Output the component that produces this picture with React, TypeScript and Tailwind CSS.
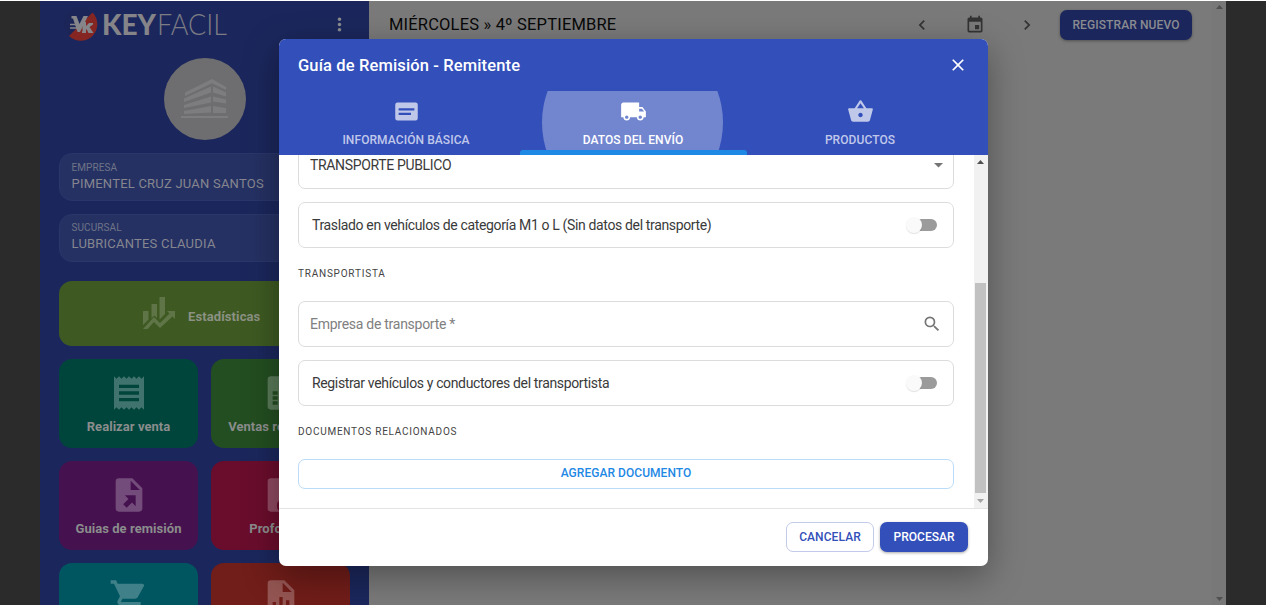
import React from "react";
import { MdChevronLeft, MdChevronRight, MdClose, MdEvent, MdLocalShipping, MdMoreVert, MdReceipt, MdSearch, MdShoppingBasket, MdShoppingCart } from "react-icons/md";

function Logo() {
  return (
    <svg width="168" height="42" viewBox="0 1 168 42" className="block">
      <circle cx="17.500" cy="24" r="16.500" fill="#1c2558" />
      <path d="M29.500 12.500 A16.500 16.500 0 0 1 6 36 Z" fill="#862622" />
      <path d="M8.500 16h5l3 8 4-8h4.500l-8 16h-2.500L10 18.500H8.500z" fill="#85858a" />
      <path d="M7 24.500h7M7 28h8" stroke="#85858a" strokeWidth="1.500" />
      <path d="M19.500 22h3.500v4l3-3h4v1.500l-3.500 2.500 4 6h-5l-2-4-.5 1v3h-4v-1.500l.5-.5z" fill="#85858a" />
      <text x="39" y="35" textLength="54" lengthAdjust="spacingAndGlyphs" fontFamily="Lato, sans-serif" fontWeight="900" fontSize="29" fill="#858589">KEY</text>
      <text x="94" y="35" textLength="70" lengthAdjust="spacingAndGlyphs" fontFamily="Lato, sans-serif" fontWeight="300" fontSize="29" fill="#7c7c84">FACIL</text>
    </svg>
  );
}

function Building() {
  return (
    <svg width="48" height="40" viewBox="0 0 48 40" fill="#7d7d80">
      <path d="M4 13.500 31 0 45 8v3L31 4.200 4 17z" />
      <path d="M3 19.500 30 7.500v6L3 23zM32 7.500 45 13.500v4L32 13.500zM3 26 30 17.500v6L3 29zM32 17.500 45 20.500v4L32 22.500zM3 32 30 27v6.500L3 35zM32 27l13 2v5H32zM0 37h47v2H0z" />
    </svg>
  );
}

function FileIcon({ kind }: { kind: "table" | "arrow" | "money" | "chart" }) {
  return (
    <svg width="40" height="40" viewBox="0 0 24 24" fill="currentColor">
      <path fillRule="evenodd" d="M6 2a2 2 0 0 0-2 2v16a2 2 0 0 0 2 2h12a2 2 0 0 0 2-2V8l-6-6zm7 1.500L18.500 9H13z" />
      {kind === "table" && <path className="text-[#234e21]" d="M7 11h3v2H7zm0 3h3v2H7zm0 3h3v2H7zm4-6h6v2h-6zm0 3h6v2h-6zm0 3h6v2h-6z" />}
      {kind === "arrow" && <path className="text-[#46114f]" d="M9.500 12.200H16v6.500l-2.200-2.200-3.200 3.200-2.100-2.100 3.200-3.200z" />}
      {kind === "money" && <circle className="text-[#6a0d2c]" cx="14" cy="18.500" r="4.500" />}
      {kind === "chart" && <path className="text-[#711d19]" d="M7 15h2v5H7zm4-3h2v8h-2zm4 2h2v6h-2z" />}
    </svg>
  );
}

function StatsIcon() {
  return (
    <svg width="34" height="34" viewBox="0 0 34 34" fill="#5f7548">
      <path d="M1 15h5.500v8.500L1 29zM9.500 8H15v14l-2.500-2.500-3 2.500zM17.500 1H23v17l-5.500 5.500zM25 15h8v8l-2.500-2.500L18 32l-6-6-6.500 7H1l11-12 6 6 9.500-9.500z" />
    </svg>
  );
}

function Account({ label, value }: { label: string; value: string }) {
  return (
    <div className="h-12 rounded-[13px] border border-[#2a366a] bg-[#253163] px-[11.500px] pt-[7.500px] text-[#85868f]">
      <div className="text-[10px] leading-[12px] tracking-[0.100px] text-[#6f7487]">{label}</div>
      <div className="mt-px text-[13px] leading-[18px] tracking-[0.220px]">{value}</div>
    </div>
  );
}

function Tile({ label, tone, children }: { label?: string; tone: string; children: React.ReactNode }) {
  return (
    <div className={"flex h-[89px] flex-col items-center rounded-[13px] pt-[14px] " + tone}>
      <div className="h-10 text-white/25">{children}</div>
      {label && <div className="mt-[5px] whitespace-nowrap text-[13px] font-bold leading-[18px] tracking-[0.050px] text-[#8a8d8c]">{label}</div>}
    </div>
  );
}

function Sidebar() {
  return (
    <aside className="w-[329px] shrink-0 overflow-hidden bg-[#1b275c] px-[19px]">
      <div className="flex h-[57px] items-start justify-between pl-[4px]">
        <Logo />
        <MdMoreVert className="mt-[13px] text-[#8b8c90]" size={21} />
      </div>
      <div className="mx-auto flex size-[82px] items-center justify-center rounded-full bg-[#6e6e70]">
        <Building />
      </div>
      <div className="mt-[13px] flex w-[290px] flex-col gap-[12.500px]">
        <Account label="EMPRESA" value="PIMENTEL CRUZ JUAN SANTOS" />
        <Account label="SUCURSAL" value="LUBRICANTES CLAUDIA" />
      </div>
      <div className="mt-[19.500px] flex h-[64.500px] w-[290px] items-center rounded-[13px] bg-[#3e5a22] pl-[83px]">
        <StatsIcon />
        <span className="ml-[12px] mt-[6px] text-[13px] font-bold tracking-[0.100px] text-[#8b9183]">Estadísticas</span>
      </div>
      <div className="mt-[13px] grid w-[291px] grid-cols-2 gap-[13px]">
        <Tile label="Realizar venta" tone="bg-[#00453c]"><MdReceipt size={40} /></Tile>
        <Tile label="Ventas realizadas" tone="bg-[#234e21]"><FileIcon kind="table" /></Tile>
        <Tile label="Guias de remisión" tone="bg-[#46114f]"><FileIcon kind="arrow" /></Tile>
        <Tile label="Proformas" tone="bg-[#6a0d2c]"><FileIcon kind="money" /></Tile>
        <Tile tone="bg-[#005660]"><MdShoppingCart size={40} /></Tile>
        <Tile tone="bg-[#711d19]"><FileIcon kind="chart" /></Tile>
      </div>
    </aside>
  );
}

function Switch() {
  return (
    <div className="flex h-[18px] w-[31px] items-center">
      <div className="z-10 size-4 shrink-0 rounded-full bg-[#fafafa] shadow-[0_1px_1px_rgba(0,0,0,0.12)]" />
      <div className="-ml-[8px] h-3 w-[23px] shrink-0 rounded-r-full bg-[#9b9b9b]" />
    </div>
  );
}

function Option({ text }: { text: string }) {
  return (
    <div className="flex h-[46px] items-center justify-between rounded-[7px] border border-[#dcdcdc] pl-[13px] pr-[16px] text-[14px] tracking-[-0.355px] text-[#3a3a3a]">
      <span>{text}</span>
      <Switch />
    </div>
  );
}

function Tab({ label, active, children }: { label: string; active?: boolean; children: React.ReactNode }) {
  return (
    <div className={"relative flex h-16 flex-1 flex-col items-center overflow-hidden pt-[7px] " + (active ? "text-white" : "text-[#c0c8ea]")}>
      {active && <div className="absolute -top-[59px] left-[22px] size-[181px] rounded-full bg-[#7286cf]" />}
      <div className="relative h-[27px] pr-px">{children}</div>
      <div className="relative mt-[6px] pr-px text-[12px] font-medium leading-[18px] tracking-[0.080px]">{label}</div>
      {active && <div className="absolute inset-x-0 bottom-0 h-[5px] rounded-t-[3px] bg-[#1e88e5]" />}
    </div>
  );
}

function CardIcon() {
  return (
    <svg width="27" height="27" viewBox="0 0 24 24" fill="currentColor">
      <path fillRule="evenodd" d="M4 4a2 2 0 0 0-2 2v12a2 2 0 0 0 2 2h16a2 2 0 0 0 2-2V6a2 2 0 0 0-2-2zm1 5h14v2H5zm0 4h11v2H5z" />
    </svg>
  );
}

function Triangle({ up, tone }: { up?: boolean; tone: string }) {
  return (
    <svg width="7" height="4" viewBox="0 0 7 4" className={tone} fill="currentColor">
      <path d={up ? "M0 4 3.500 0 7 4z" : "M0 0h7L3.500 4z"} />
    </svg>
  );
}

function Dialog() {
  return (
    <section role="dialog" className="absolute left-[279px] top-[39px] flex h-[526.500px] w-[709px] flex-col overflow-hidden rounded-[7px] bg-white shadow-[0_10px_35px_rgba(0,0,0,0.35)]">
      <header className="h-[116px] shrink-0 bg-[#324fba] text-white">
        <div className="flex h-[52px] items-center justify-between pl-[19px] pr-[20px]">
          <h1 className="pt-[2px] text-[16.500px] font-medium tracking-[0.130px]">Guía de Remisión - Remitente</h1>
          <MdClose size={20} />
        </div>
        <div className="flex px-[14px]">
          <Tab label="INFORMACIÓN BÁSICA"><CardIcon /></Tab>
          <Tab label="DATOS DEL ENVÍO" active><MdLocalShipping size={27} /></Tab>
          <Tab label="PRODUCTOS"><MdShoppingBasket size={27} /></Tab>
        </div>
      </header>
      <div className="flex h-[353px] shrink-0 overflow-hidden">
        <div className="flex w-[695px] flex-col pl-[19px] pr-5">
          <div className="-mt-[13px] flex h-[47px] shrink-0 items-center justify-between rounded-[7px] border border-[#dcdcdc] pl-[11px] pr-[10px] text-[14px] tracking-[-0.340px] text-[#3a3a3a]">
            <span>TRANSPORTE PUBLICO</span>
            <svg width="9" height="5" viewBox="0 0 9 5" fill="#757575"><path d="M0 0h9L4.500 4.500z" /></svg>
          </div>
          <div className="mt-[13px]"><Option text="Traslado en vehículos de categoría M1 o L (Sin datos del transporte)" /></div>
          <div className="flex h-[53px] shrink-0 items-center pb-[2px] text-[10px] tracking-[0.780px] text-[#444]">TRANSPORTISTA</div>
          <div className="flex h-[46px] shrink-0 items-center justify-between rounded-[7px] border border-[#dcdcdc] pl-[11px] pr-[11px] text-[14px] tracking-[-0.270px] text-[#808080]">
            <span>Empresa de transporte *</span>
            <MdSearch size={20} className="text-[#757575]" />
          </div>
          <div className="mt-[13px]"><Option text="Registrar vehículos y conductores del transportista" /></div>
          <div className="flex h-[52.500px] shrink-0 items-center pb-[2px] text-[10px] tracking-[0.750px] text-[#444]">DOCUMENTOS RELACIONADOS</div>
          <button className="h-[30px] shrink-0 rounded-[7px] border border-[#bbdcf8] pb-px text-[12px] font-medium tracking-[0.050px] text-[#1e88e5]">AGREGAR DOCUMENTO</button>
        </div>
        <div className="flex w-[14px] flex-col items-center bg-[#f1f1f1] pr-px">
          <div className="flex h-[14px] items-center"><Triangle up tone="text-[#505050]" /></div>
          <div className="mt-[114px] h-[210px] w-[11px] bg-[#c1c1c1]" />
          <div className="flex h-[15px] items-center"><Triangle tone="text-[#a3a3a3]" /></div>
        </div>
      </div>
      <footer className="flex flex-1 items-start justify-end gap-[6px] border-t border-[#e3e3e3] pr-5 pt-[13px]">
        <button className="h-[30px] w-[88px] rounded-[7px] border border-[#c2caea] text-[12px] font-medium tracking-[0.080px] text-[#324fba]">CANCELAR</button>
        <button className="h-[30px] w-[88px] rounded-[7px] bg-[#324fba] text-[12px] font-medium text-white shadow-[0_1px_3px_rgba(0,0,0,0.35)]">PROCESAR</button>
      </footer>
    </section>
  );
}

export default function App() {
  return (
    <div className="relative h-[605px] w-[1266px] overflow-hidden bg-white pt-px font-[Roboto,sans-serif]">
      <div className="flex h-[604px] overflow-hidden bg-[#2b2b2b] px-10">
        <Sidebar />
        <main className="flex flex-1 bg-[#7a7a7a]">
          <div className="flex h-12 flex-1 items-center pl-5 text-[#333]">
            <h2 className="flex-1 pt-px text-[16.500px] tracking-[0.180px] text-[#080808]">MIÉRCOLES » 4º SEPTIEMBRE</h2>
            <MdChevronLeft size={20} />
            <MdEvent size={20} className="ml-[33px]" />
            <MdChevronRight size={20} className="ml-[32px]" />
            <button className="mb-px ml-[23px] mr-[20px] h-[30px] w-[132px] rounded-[7px] bg-[#1b275c] text-[12px] font-medium tracking-[0.100px] text-[#8a8b91] shadow-[0_1px_3px_rgba(0,0,0,0.35)]">REGISTRAR NUEVO</button>
          </div>
          <div className="flex w-[14px] flex-col items-center justify-between bg-[#787878] py-[4px]">
            <Triangle up tone="text-[#505050]" />
            <Triangle tone="text-[#505050]" />
          </div>
        </main>
      </div>
      <Dialog />
    </div>
  );
}
